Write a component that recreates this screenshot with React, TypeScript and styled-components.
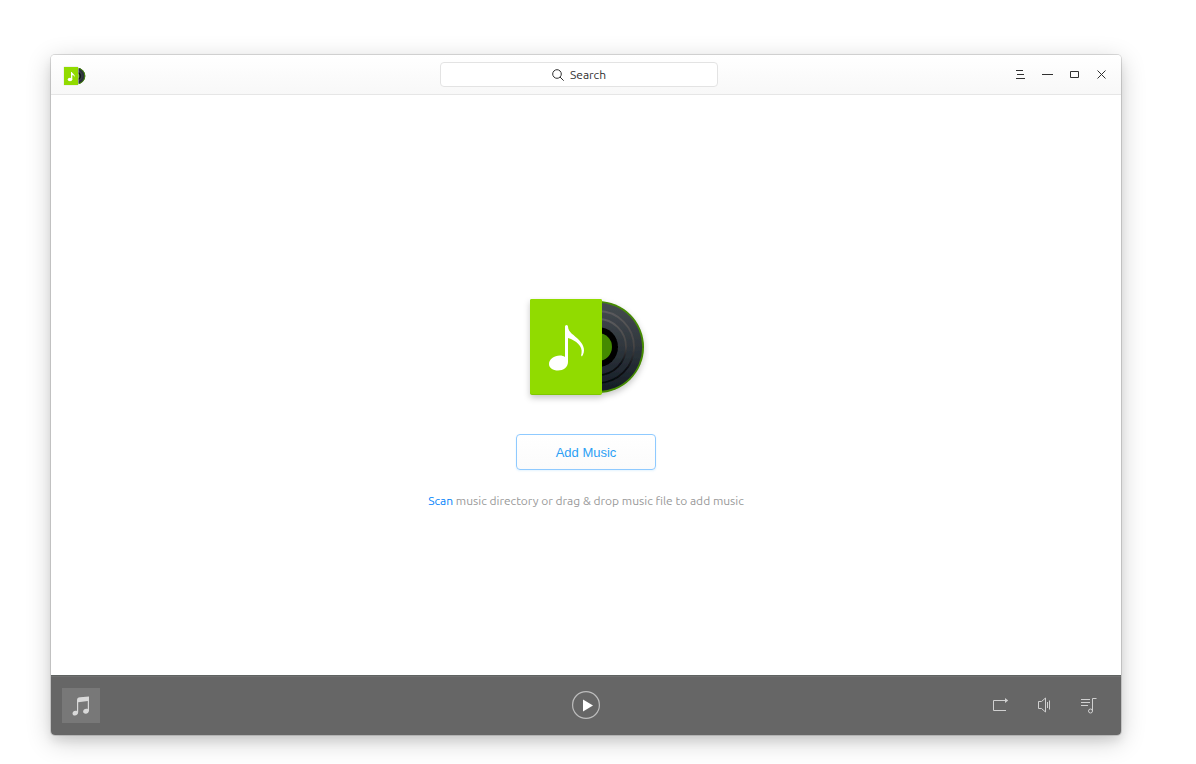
import React from "react";
import styled, { createGlobalStyle } from "styled-components";

const GlobalStyle = createGlobalStyle`
  *, *::before, *::after { box-sizing: border-box; }
  body {
    margin: 0;
    background: #fff;
    font-family: Ubuntu, "Noto Sans", sans-serif;
    font-size: 12px;
    color: #303030;
  }
  button { font: inherit; color: inherit; padding: 0; border: 0; background: none; cursor: pointer; }
  svg { display: block; }
`;

const Desktop = styled.div`
  display: flex;
  min-height: 100vh;
  padding: 55px 75px 29px 51px;
`;

const Window = styled.div`
  flex: 1;
  display: flex;
  flex-direction: column;
  overflow: hidden;
  background: #fff;
  border-radius: 4px;
  box-shadow: 0 0 0 1px rgba(0, 0, 0, 0.13), 0 6px 26px rgba(0, 0, 0, 0.2), 0 6px 10px rgba(0, 0, 0, 0.08);
`;

const TitleBar = styled.header`
  display: grid;
  grid-template-columns: 1fr minmax(0, 278px) 1fr;
  align-items: center;
  height: 40px;
  padding-right: 14px;
  background: linear-gradient(#fff, #f8f8f8);
  border-bottom: 1px solid #e6e6e6;
`;

const AppMark = styled.div`
  padding-left: 12px;
`;

const SearchBox = styled.label`
  display: flex;
  align-items: center;
  justify-content: center;
  gap: 6px;
  height: 25px;
  padding-left: 4px;
  background: #fff;
  border: 1px solid #e3e3e3;
  border-radius: 4px;
`;

const SearchInput = styled.input`
  width: 40px;
  height: 16px;
  padding: 0;
  border: 0;
  outline: 0;
  background: none;
  font: inherit;
  line-height: 16px;
  color: #303030;
  &::placeholder { color: #303030; opacity: 1; }
`;

const WindowControls = styled.div`
  display: flex;
  justify-content: flex-end;
  gap: 14px;
`;

const WindowButton = styled.button`
  width: 13px;
  height: 13px;
`;

const Content = styled.main`
  flex: 1;
  display: flex;
  flex-direction: column;
  align-items: center;
  justify-content: center;
  padding-top: 36px;
`;

const AddButton = styled.button`
  width: 140px;
  height: 36px;
  margin: 25px 0 23px;
  border: 1px solid #8fcaff;
  border-radius: 4px;
  background: linear-gradient(#fff, #fbfbfb);
  box-shadow: 0 1px 2px rgba(44, 167, 248, 0.12);
  color: #2ca0f5;
  font-family: "Liberation Sans", Arial, sans-serif;
  font-size: 13px;
`;

const Hint = styled.p`
  margin: 0;
  line-height: 16px;
  color: #999;
`;

const ScanLink = styled.a`
  color: #0082fa;
  text-decoration: none;
`;

const PlayerBar = styled.footer`
  display: grid;
  grid-template-columns: 1fr auto 1fr;
  align-items: center;
  height: 60px;
  background: #666;
  box-shadow: inset 0 1px 0 #5f6361, inset 0 2px 0 #707070;
`;

const Cover = styled.button`
  display: flex;
  align-items: center;
  justify-content: center;
  width: 38px;
  height: 35px;
  margin-left: 11px;
  background: #787878;
`;

const PlayButton = styled.button`
  width: 28px;
  height: 28px;
`;

const PlayerTools = styled.div`
  display: flex;
  justify-content: flex-end;
  gap: 20px;
  padding-right: 21px;
`;

const ToolButton = styled.button`
  width: 24px;
  height: 24px;
`;

const AppLogo = () => (
  <svg width="24" height="23" viewBox="0 -2 24 23" role="img" aria-label="Music">
    <circle cx="14" cy="11" r="8.2" fill="#2b3239" />
    <circle cx="14" cy="11" r="7.9" fill="none" stroke="#458a06" />
    <circle cx="14" cy="11" r="5" fill="none" stroke="#444b50" strokeWidth=".6" />
    <circle cx="14" cy="11" r="3.8" fill="#0b0d0e" />
    <circle cx="14" cy="11" r="2.6" fill="#458a06" />
    <rect x=".5" y="1.5" width="15" height="19" rx="1" fill="#e4e9dd" />
    <rect x="1" y="2" width="14" height="18" fill="#91db00" />
    <ellipse cx="7" cy="14.5" rx="2.3" ry="1.7" fill="#fff" />
    <path d="M8 14.5V7h.8c.3 1.6 3.6 2.3 3 5.6-.2-1.5-1.5-2.3-2.5-2.6v4.5Z" fill="#fff" />
  </svg>
);

const AlbumArt = () => (
  <svg width="126" height="112" viewBox="0 0 126 112" aria-hidden="true">
    <defs>
      <linearGradient id="vinyl" x1="0" y1="0" x2="0" y2="1">
        <stop offset="0" stopColor="#454b50" />
        <stop offset=".5" stopColor="#2f363d" />
        <stop offset="1" stopColor="#141c25" />
      </linearGradient>
      <linearGradient id="groove" x1="0" y1="0" x2="0" y2="1">
        <stop offset="0" stopColor="#5c5c5e" />
        <stop offset=".5" stopColor="#454343" />
        <stop offset=".8" stopColor="#090d12" />
        <stop offset="1" stopColor="#05080c" />
      </linearGradient>
      <filter id="soft" x="-20%" y="-20%" width="140%" height="140%">
        <feDropShadow dx="0" dy="3" stdDeviation="3" floodColor="#000" floodOpacity=".22" />
      </filter>
    </defs>
    <g filter="url(#soft)">
      <circle cx="75" cy="50" r="46" fill="#458a06" />
      <circle cx="75" cy="50" r="44.2" fill="url(#vinyl)" />
      <circle cx="75" cy="50" r="36" fill="none" stroke="url(#groove)" strokeWidth="1.8" />
      <circle cx="75" cy="50" r="28" fill="none" stroke="url(#groove)" strokeWidth="1.8" />
      <circle cx="75" cy="50" r="20" fill="#000" />
      <circle cx="75" cy="50" r="14" fill="#458a06" />
      <rect x="7" y="2" width="72" height="96" rx="2" fill="#7fc800" />
      <rect x="7" y="2" width="72" height="95" rx="2" fill="#91db00" />
    </g>
    <path
      d="M42 60V29.5q0-1.5 1.5-1.5t1.5 1.5c0 6 6.5 8.5 11 13.5 5.5 6 6.5 11 3 16.5-1-.5-1-1.5-.5-3 1.5-7.5-5.5-13-13.500-15.500V65c0 5-4.500 8.500-10 8.500-5 0-9-2.500-9-6.500 0-4.500 5-8.500 11-8.500 2 0 3.500.5 5 1.500Z"
      fill="#fff"
    />
  </svg>
);

const controlStroke = { fill: "none", stroke: "#303030" };
const toolStroke = { fill: "none", stroke: "#d0d0d0" };

export default function App() {
  return (
    <>
      <GlobalStyle />
      <Desktop>
        <Window>
          <TitleBar>
            <AppMark><AppLogo /></AppMark>
            <SearchBox>
              <svg width="12" height="12" viewBox="0 0 12 12" {...controlStroke} aria-hidden="true">
                <circle cx="5" cy="5" r="4.3" />
                <path d="m8 8 3.7 3.7" />
              </svg>
              <SearchInput type="text" placeholder="Search" aria-label="Search" />
            </SearchBox>
            <WindowControls>
              <WindowButton aria-label="Menu">
                <svg width="13" height="13" {...controlStroke}><path d="M3 2.500h7M4 6.500h7M3 10.500h9" /></svg>
              </WindowButton>
              <WindowButton aria-label="Minimize">
                <svg width="13" height="13" {...controlStroke}><path d="M2 6.500h11" /></svg>
              </WindowButton>
              <WindowButton aria-label="Maximize">
                <svg width="13" height="13" {...controlStroke}><path d="M3.500 3.500h8v6h-8Z" /></svg>
              </WindowButton>
              <WindowButton aria-label="Close">
                <svg width="13" height="13" {...controlStroke}><path d="m3.500 2.500 8 8m0-8-8 8" /></svg>
              </WindowButton>
            </WindowControls>
          </TitleBar>

          <Content>
            <AlbumArt />
            <AddButton>Add Music</AddButton>
            <Hint>
              <ScanLink href="#scan">Scan</ScanLink> music directory or drag &amp; drop music file to add music
            </Hint>
          </Content>

          <PlayerBar>
            <Cover aria-label="Now playing">
              <svg width="18" height="22" viewBox="0 -2 18 22" fill="#d9d9d9">
                <path d="M5 4.200Q5 1.500 8 1.300L17 .6V14.500c0 2-1.500 3.200-3.300 3.200-1.500 0-2.600-.8-2.600-2.100 0-1.600 1.400-2.800 3.200-2.800.6 0 1.100.1 1.500.3V5L6.200 6.200V16c0 2-1.500 3.600-3.300 3.600C1.400 19.600.5 18.700.5 17.500c0-1.600 1.300-2.800 3-2.800.6 0 1.100.1 1.500.3Z" />
              </svg>
            </Cover>
            <PlayButton aria-label="Play">
              <svg width="28" height="28" viewBox="0 0 28 28">
                <circle cx="14" cy="14" r="13.4" fill="none" stroke="#bdbdbd" strokeWidth="1.2" />
                <path d="M11 8.500v12l10-6Z" fill="#fff" />
              </svg>
            </PlayButton>
            <PlayerTools>
              <ToolButton aria-label="Repeat">
                <svg width="24" height="24" {...toolStroke}>
                  <path d="M18 17.500H5.500v-10H18" />
                  <path d="M17 5v5l3.200-2.500Z" fill="#d0d0d0" stroke="none" />
                </svg>
              </ToolButton>
              <ToolButton aria-label="Volume">
                <svg width="24" height="24" {...toolStroke}>
                  <path d="M9.500 8.500H6.500v7h3l4 3.500V5Z" />
                  <path d="M15.500 9v6M17.500 7.500v9" />
                </svg>
              </ToolButton>
              <ToolButton aria-label="Playlist">
                <svg width="24" height="24" {...toolStroke}>
                  <path d="M5 6.500h9M5 9.500h9M5 12.500h7M20.500 5.500h-4V18" />
                  <circle cx="14.5" cy="18" r="2" />
                </svg>
              </ToolButton>
            </PlayerTools>
          </PlayerBar>
        </Window>
      </Desktop>
    </>
  );
}
